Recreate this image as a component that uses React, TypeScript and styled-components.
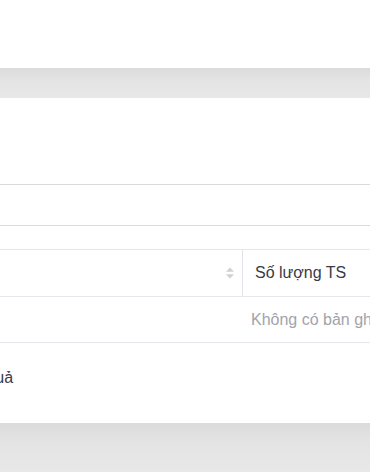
import React from 'react'
import styled, { createGlobalStyle } from 'styled-components'

const GlobalStyle = createGlobalStyle`
  html, body {
    margin: 0;
    padding: 0;
    background: #ffffff;
  }
  body {
    font-family: 'Liberation Sans', Arial, sans-serif;
    overflow: hidden;
  }
`

const Page = styled.div`
  width: 370px;
  height: 472px;
  overflow: hidden;
  display: flex;
  flex-direction: column;
`

const TopBar = styled.div`
  height: 68px;
  background: #ffffff;
  flex-shrink: 0;
`

const GrayBand = styled.div<{ $h: number }>`
  height: ${(p) => p.$h}px;
  flex-shrink: 0;
  background: linear-gradient(to bottom, #dbdbdb 0%, #e4e4e4 40%, #e8e8e8 100%);
`

const Card = styled.div`
  background: #ffffff;
  height: 325px;
  flex-shrink: 0;
  display: flex;
  flex-direction: column;
  padding-top: 86px;
  box-sizing: border-box;
`

const FilterRow = styled.div`
  height: 42px;
  box-sizing: border-box;
  border-top: 1px solid #d9d9de;
  border-bottom: 1px solid #d9d9de;
`

const Table = styled.div`
  margin-top: 23px;
  border-top: 1px solid #e6e6ec;
  display: flex;
  flex-direction: column;
`

const HeaderRow = styled.div`
  display: flex;
  height: 47px;
  box-sizing: border-box;
  border-bottom: 1px solid #e6e6ec;
`

const HeaderCell = styled.div<{ $w?: number }>`
  ${(p) => (p.$w ? `width: ${p.$w}px;` : 'flex: 1;')}
  box-sizing: border-box;
  display: flex;
  align-items: center;
  font-size: 16px;
  color: #3a3a44;
  white-space: nowrap;
  padding-left: 12px;
`

const SortCell = styled(HeaderCell)`
  justify-content: flex-end;
  padding-right: 7px;
  border-right: 1px solid #e3e3ea;
`

const SortIcon = styled.svg`
  width: 10px;
  height: 12px;
`

const BodyRow = styled.div`
  height: 46px;
  box-sizing: border-box;
  display: flex;
  align-items: center;
  border-bottom: 1px solid #e6e6ec;
  padding-left: 251px;
  font-size: 16px;
  color: #a3a3ab;
  white-space: nowrap;
`

const Summary = styled.div`
  height: 70px;
  display: flex;
  align-items: center;
  font-size: 16px;
  color: #3a3a44;
  white-space: nowrap;
  margin-left: -42px;
`

export default function App() {
  return (
    <>
      <GlobalStyle />
      <Page>
        <TopBar />
        <GrayBand $h={30} />
        <Card>
          <FilterRow />
          <Table>
            <HeaderRow>
              <SortCell $w={243}>
                <SortIcon viewBox="0 0 10 12">
                  <path d="M5 0.5 L9 4.8 L1 4.8 Z" fill="#d0d0d6" />
                  <path d="M5 11.5 L9 7.2 L1 7.2 Z" fill="#d0d0d6" />
                </SortIcon>
              </SortCell>
              <HeaderCell>Số lượng TS</HeaderCell>
            </HeaderRow>
            <BodyRow>Không có bản ghi nào</BodyRow>
          </Table>
          <Summary>Kết quả</Summary>
        </Card>
        <GrayBand $h={49} />
      </Page>
    </>
  )
}
